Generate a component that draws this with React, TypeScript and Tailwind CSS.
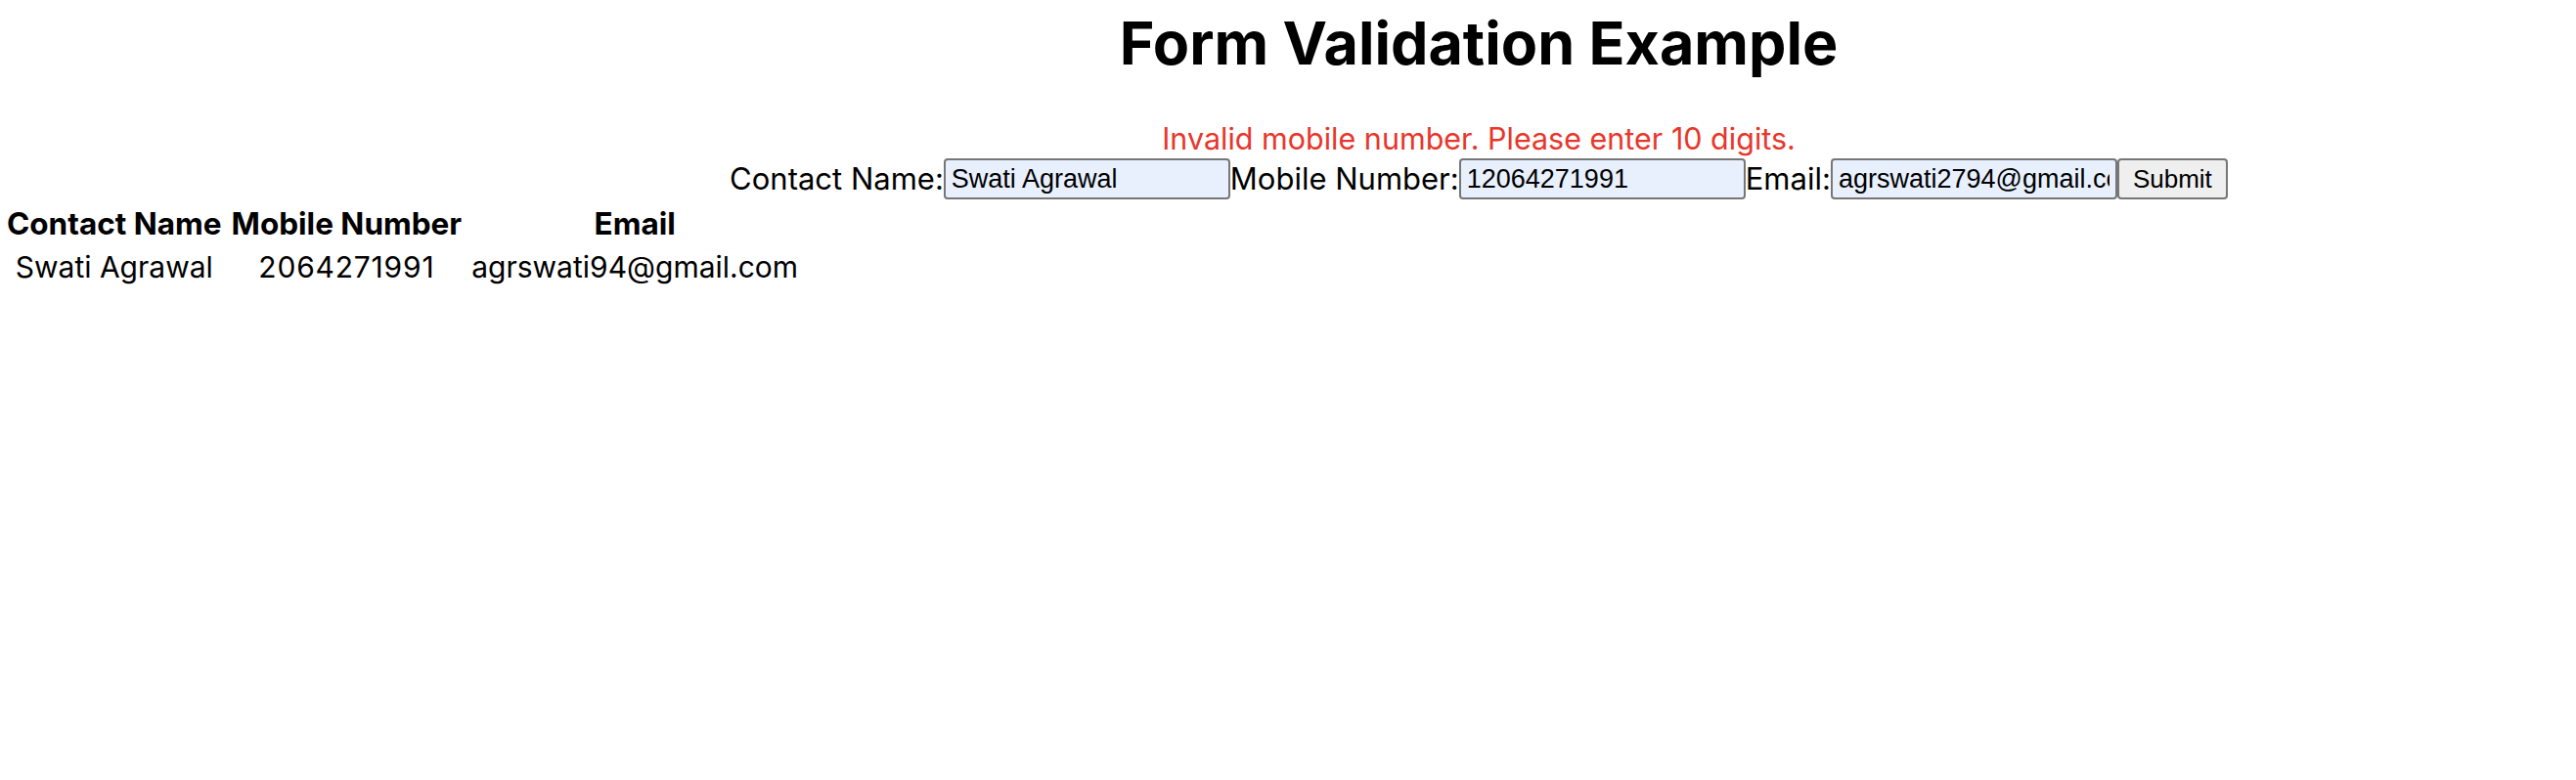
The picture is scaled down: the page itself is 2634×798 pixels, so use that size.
import { useState } from "react";

type Contact = {
  name: string;
  mobile: string;
  email: string;
};

const App = () => {
  const [name, setName] = useState("Swati Agrawal");
  const [mobile, setMobile] = useState("12064271991");
  const [email, setEmail] = useState("agrswati2794@gmail.com");
  const [error, setError] = useState("Invalid mobile number. Please enter 10 digits.");
  const [contacts, setContacts] = useState<Contact[]>([
    { name: "Swati Agrawal", mobile: "2064271991", email: "agrswati94@gmail.com" },
  ]);

  const handleSubmit = (e: React.FormEvent) => {
    e.preventDefault();
    if (!/^\d{10}$/.test(mobile)) {
      setError("Invalid mobile number. Please enter 10 digits.");
      return;
    }
    setError("");
    setContacts([...contacts, { name, mobile, email }]);
  };

  const inputCls =
    "w-[293px] h-[42px] border-2 border-[#767676] rounded-[4px] bg-[#e8f0fe] px-[6px] text-[27px] text-black font-['Liberation_Sans',Arial,sans-serif] outline-none";

  return (
    <div className="min-h-screen bg-white text-black font-['Inter',sans-serif]">
      {/* header + form, centred a bit right of the page */}
      <div className="pl-[390px] text-center">
        <h1 className="pt-[8px] text-[61px] font-bold leading-[72px]">Form Validation Example</h1>
        <div className="mt-[44px] h-[36px] text-[30.5px] leading-[36px] text-[#e8362b]">{error}</div>
        <form className="flex justify-center items-center text-[31px]" onSubmit={handleSubmit}>
          <label>Contact Name:</label>
          <input className={inputCls} value={name} onChange={(e) => setName(e.target.value)} />
          <label>Mobile Number:</label>
          <input className={inputCls} value={mobile} onChange={(e) => setMobile(e.target.value)} />
          <label>Email:</label>
          <input className={inputCls} value={email} onChange={(e) => setEmail(e.target.value)} />
          <button
            type="submit"
            className="w-[113px] h-[42px] border-2 border-[#767676] rounded-[4px] bg-[#efefef] text-[26px] font-['Liberation_Sans',Arial,sans-serif]"
          >
            Submit
          </button>
        </form>
      </div>

      {/* contacts table */}
      <table className="-mt-[2px] border-separate border-spacing-[4px]">
        <thead>
          <tr className="text-[31.5px]">
            <th className="px-[3px] font-bold leading-[40px]">Contact Name</th>
            <th className="px-[3px] font-bold leading-[40px]">Mobile Number</th>
            <th className="px-[3px] font-bold leading-[40px]">Email</th>
          </tr>
        </thead>
        <tbody>
          {contacts.map((c, i) => (
            <tr key={i} className="text-[30px]">
              <td className="px-[3px] text-center leading-[40px]">{c.name}</td>
              <td className="px-[3px] text-center leading-[40px] tracking-[0.8px]">{c.mobile}</td>
              <td className="px-[3px] text-center leading-[40px]">{c.email}</td>
            </tr>
          ))}
        </tbody>
      </table>
    </div>
  );
};

export default App;
